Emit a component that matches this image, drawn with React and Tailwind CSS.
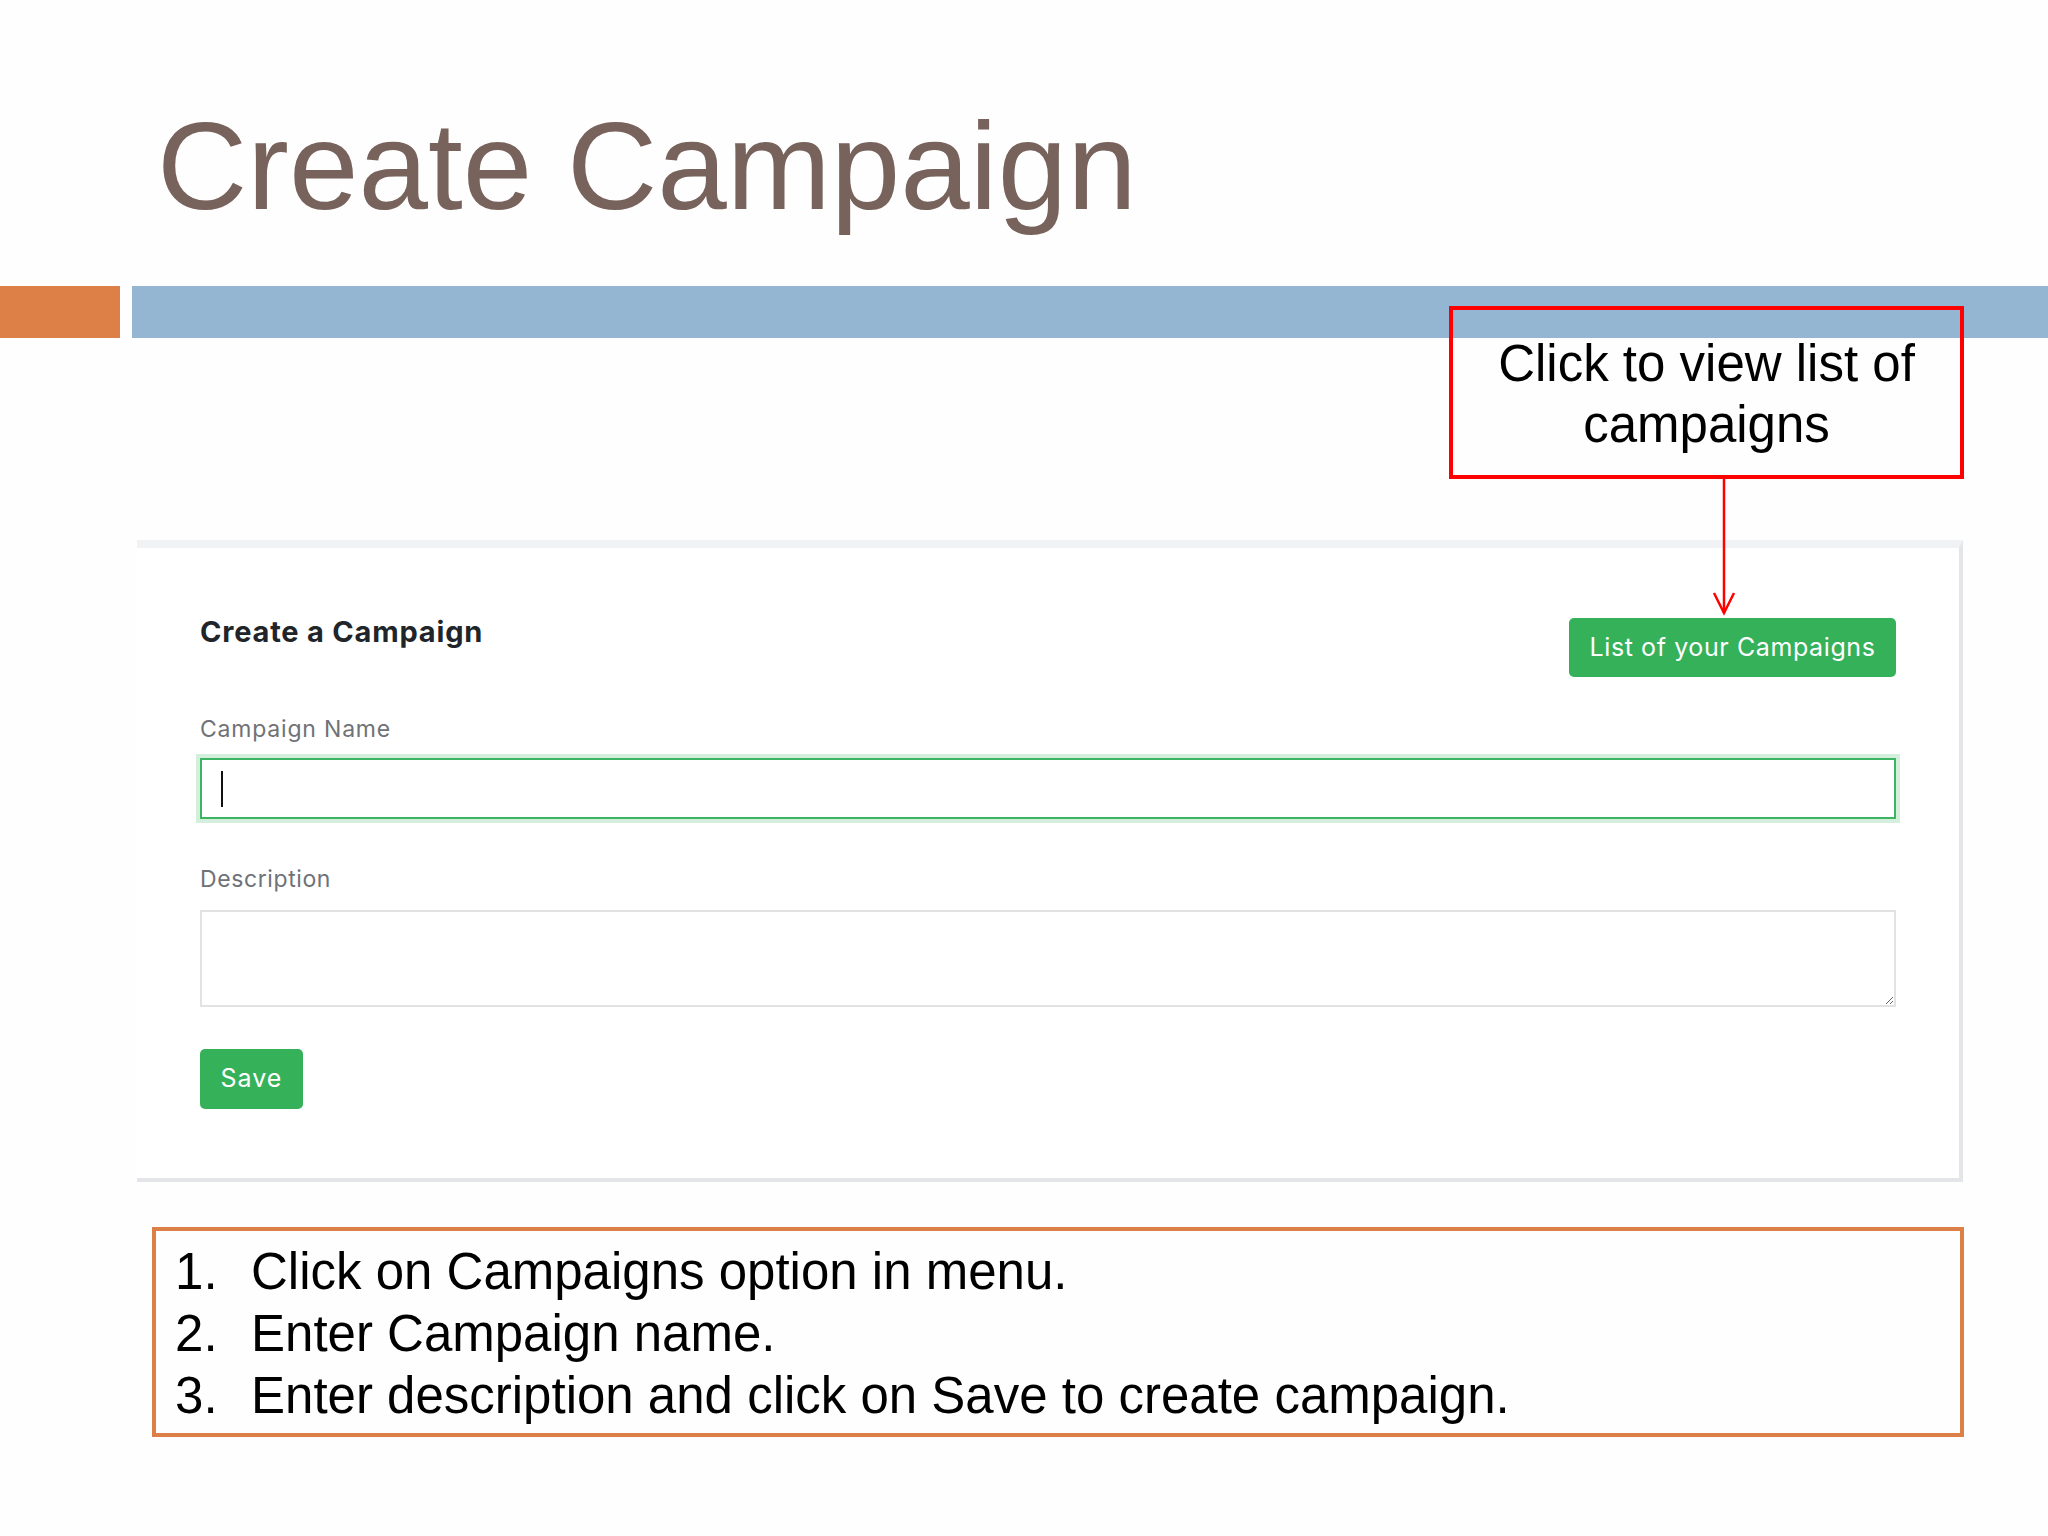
import React from "react";

const STEPS = [
  "Click on Campaigns option in menu.",
  "Enter Campaign name.",
  "Enter description and click on Save to create campaign.",
];

function CampaignForm() {
  return (
    <div className="ml-[137px] mt-[202px] w-[1826px] h-[642px] bg-white border-t-[8px] border-t-[#f1f2f4] border-r-[4px] border-r-[#e3e5e8] border-b-[4px] border-b-[#e3e5e8] px-[63px] font-[Inter,sans-serif]">
      <div className="mt-[70px] flex items-start justify-between">
        <h2 className="text-[29px] leading-[28px] font-bold text-[#212529] tracking-[0.8px]">
          Create a Campaign
        </h2>
        <button className="w-[327px] h-[59px] rounded-[5px] bg-[#35b15a] text-white text-[25px] tracking-[0.6px] flex items-center justify-center">
          List of your Campaigns
        </button>
      </div>

      <label className="block mt-[41px] text-[23px] leading-[22px] tracking-[0.8px] text-[#6f7277]">Campaign Name</label>
      <div className="mt-[18px] h-[61px] border-2 border-[#3cb563] shadow-[0_0_0_4px_#d4efdc] flex items-center pl-[19px]">
        <span className="w-[2px] h-[36px] bg-[#111]" />
      </div>

      <label className="block mt-[49px] text-[23px] leading-[22px] tracking-[0.6px] text-[#6f7277]">Description</label>
      <textarea className="block mt-[20px] w-full h-[97px] border-2 border-[#e2e2e2] bg-white outline-none" />

      <button className="mt-[42px] w-[103px] h-[60px] rounded-[5px] bg-[#35b15a] text-white text-[25px] tracking-[1px] flex items-center justify-center">
        Save
      </button>
    </div>
  );
}

export default function App() {
  return (
    <div className="relative w-[2048px] h-[1536px] bg-[#fefefe] overflow-hidden font-['Liberation_Sans',Arial,sans-serif]">
      {/* slide title */}
      <h1 className="pt-[103px] pl-[157px] text-[125px] leading-[126px] text-[#77625c]">Create Campaign</h1>

      {/* accent bars */}
      <div className="mt-[57px] flex gap-[12px] h-[52px]">
        <div className="w-[120px] bg-[#dd8047]" />
        <div className="flex-1 bg-[#94b6d2]" />
      </div>

      <CampaignForm />

      {/* steps */}
      <div className="ml-[152px] mt-[45px] w-[1812px] h-[210px] border-4 border-[#dd8047] pt-[10px] pl-[19px] text-black text-[51px] leading-[62px]">
        {STEPS.map((s, i) => (
          <div key={i} className="flex">
            <span className="w-[76px] shrink-0">{i + 1}.</span>
            <span>{s}</span>
          </div>
        ))}
      </div>

      {/* callout */}
      <div className="absolute left-[1449px] top-[306px] w-[515px] h-[173px] border-4 border-[#ff0000] pt-[23px] text-center text-black text-[51px] leading-[61px]">
        Click to view list of
        <br />
        campaigns
      </div>
      <svg className="absolute left-[1700px] top-[479px]" width="48" height="140" viewBox="0 0 48 140">
        <path d="M24 0 V134" stroke="#ff0000" strokeWidth="2.5" fill="none" />
        <path d="M14 114 L24 134 L34 114" stroke="#ff0000" strokeWidth="2.5" fill="none" />
      </svg>
    </div>
  );
}
